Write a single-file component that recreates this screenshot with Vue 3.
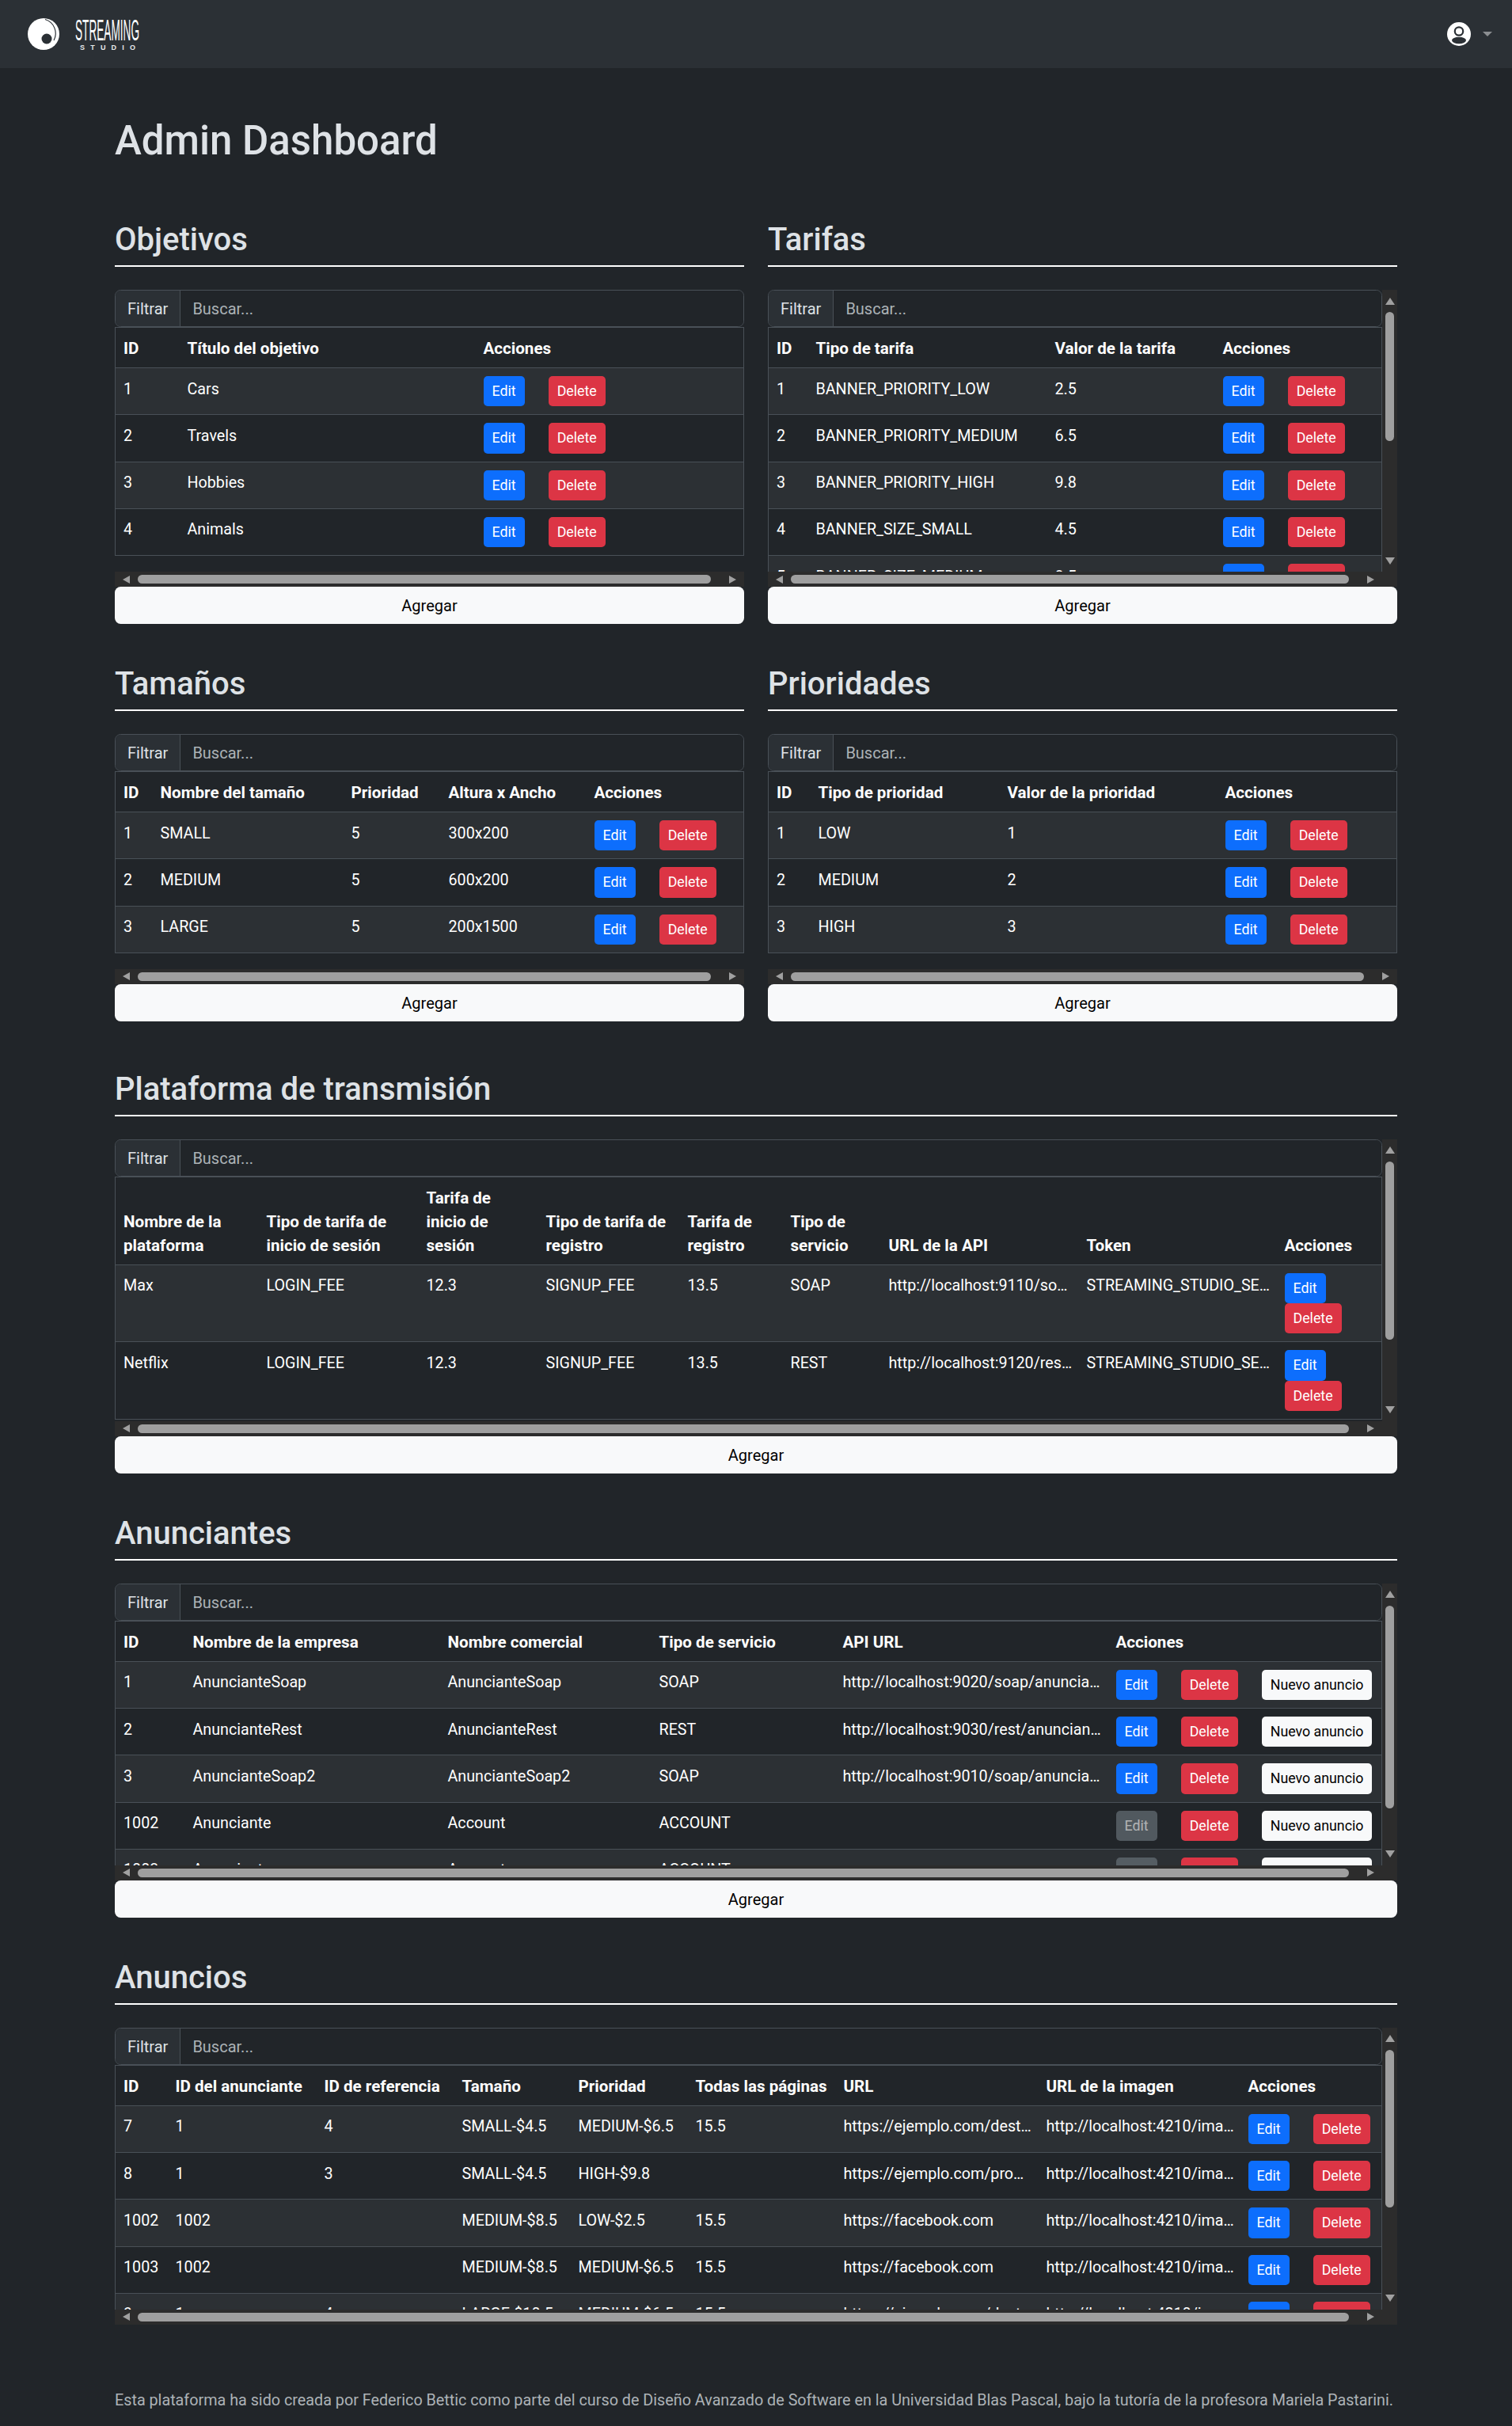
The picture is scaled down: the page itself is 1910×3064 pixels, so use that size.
<script setup>
  const url = (s) => 'http://localhost:' + s
  const token = 'STREAMING_STUDIO_SECRET'
  const image = url('4210/image')

  const objetivos = {
    title: 'Objetivos', add: true,
    cols: [83, 374, null],
    head: ['ID', 'Título del objetivo', 'Acciones'],
    rows: [['1', 'Cars'], ['2', 'Travels'], ['3', 'Hobbies'], ['4', 'Animals']]
  }
  const tarifas = {
    title: 'Tarifas', add: true, thumb: 163,
    cols: [52, 302, 212, null],
    head: ['ID', 'Tipo de tarifa', 'Valor de la tarifa', 'Acciones'],
    rows: [
      ['1', 'BANNER_PRIORITY_LOW', '2.5'],
      ['2', 'BANNER_PRIORITY_MEDIUM', '6.5'],
      ['3', 'BANNER_PRIORITY_HIGH', '9.8'],
      ['4', 'BANNER_SIZE_SMALL', '4.5'],
      ['5', 'BANNER_SIZE_MEDIUM', '8.5']
    ]
  }
  const tamanos = {
    title: 'Tamaños', add: true,
    cols: [49, 241, 123, 184, null],
    head: ['ID', 'Nombre del tamaño', 'Prioridad', 'Altura x Ancho', 'Acciones'],
    rows: [
      ['1', 'SMALL', '5', '300x200'],
      ['2', 'MEDIUM', '5', '600x200'],
      ['3', 'LARGE', '5', '200x1500']
    ]
  }
  const prioridades = {
    title: 'Prioridades', add: true,
    cols: [55, 239, 275, null],
    head: ['ID', 'Tipo de prioridad', 'Valor de la prioridad', 'Acciones'],
    rows: [['1', 'LOW', '1'], ['2', 'MEDIUM', '2'], ['3', 'HIGH', '3']]
  }
  const plataformas = {
    title: 'Plataforma de transmisión', add: true, thumb: 225,
    cols: [183, 202, 151, 179, 130, 124, 250, 250, null],
    head: ['Nombre de la plataforma', 'Tipo de tarifa de inicio de sesión', 'Tarifa de inicio de sesión', 'Tipo de tarifa de registro', 'Tarifa de registro', 'Tipo de servicio', 'URL de la API', 'Token', 'Acciones'],
    rows: [
      ['Max', 'LOGIN_FEE', '12.3', 'SIGNUP_FEE', '13.5', 'SOAP', url('9110/soap/ads'), token],
      ['Netflix', 'LOGIN_FEE', '12.3', 'SIGNUP_FEE', '13.5', 'REST', url('9120/rest/ads'), token]
    ]
  }
  const anunciantes = {
    title: 'Anunciantes', add: true, nuevo: true, thumb: 256,
    cols: [90, 322, 267, 232, 345, null],
    head: ['ID', 'Nombre de la empresa', 'Nombre comercial', 'Tipo de servicio', 'API URL', 'Acciones'],
    noEdit: ['1002', '1003'],
    rows: [
      ['1', 'AnuncianteSoap', 'AnuncianteSoap', 'SOAP', url('9020/soap/anunciantes')],
      ['2', 'AnuncianteRest', 'AnuncianteRest', 'REST', url('9030/rest/anunciantes')],
      ['3', 'AnuncianteSoap2', 'AnuncianteSoap2', 'SOAP', url('9010/soap/anunciantes')],
      ['1002', 'Anunciante', 'Account', 'ACCOUNT', ''],
      ['1003', 'Anunciante', 'Account', 'ACCOUNT', '']
    ]
  }
  const anuncios = {
    title: 'Anuncios', add: false, thumb: 199,
    cols: [68, 188, 174, 147, 148, 187, 256, 255, null],
    head: ['ID', 'ID del anunciante', 'ID de referencia', 'Tamaño', 'Prioridad', 'Todas las páginas', 'URL', 'URL de la imagen', 'Acciones'],
    rows: [
      ['7', '1', '4', 'SMALL-$4.5', 'MEDIUM-$6.5', '15.5', 'https://ejemplo.com/destino', image],
      ['8', '1', '3', 'SMALL-$4.5', 'HIGH-$9.8', '', 'https://ejemplo.com/promo', image],
      ['1002', '1002', '', 'MEDIUM-$8.5', 'LOW-$2.5', '15.5', 'https://facebook.com', image],
      ['1003', '1002', '', 'MEDIUM-$8.5', 'MEDIUM-$6.5', '15.5', 'https://facebook.com', image],
      ['9', '1', '4', 'LARGE-$10.5', 'MEDIUM-$6.5', '15.5', 'https://ejemplo.com/destino', image]
    ]
  }

  const groups = [
    { name: 'two-cols', tables: [objetivos, tarifas, tamanos, prioridades] },
    { name: 'one-col', tables: [plataformas, anunciantes, anuncios] }
  ]

  function colStyle(w){
    return w ? { width: w + 'px' } : {}
  }
</script>

<template>
  <div class="page">
    <nav class="navbar">
      <svg class="logo" width="150" height="44" viewBox="0 0 150 44">
        <circle cx="20" cy="22" r="20" fill="#fff" />
        <path d="M22 3.5 A 18.5 18.5 0 0 1 33 30" fill="none" stroke="#2b3035" stroke-width="1.2" />
        <circle cx="24" cy="28" r="6.5" fill="#2b3035" />
        <text x="60" y="30" font-family="Liberation Sans, sans-serif" font-size="37" fill="#fff" textLength="81" lengthAdjust="spacingAndGlyphs">STREAMING</text>
        <text x="66" y="42" font-family="Liberation Sans, sans-serif" font-size="9" font-weight="700" fill="#e6e8ea" textLength="70">STUDIO</text>
      </svg>
      <div class="user">
        <svg width="30" height="30" viewBox="0 0 30 30">
          <defs>
            <clipPath id="user-clip"><circle cx="15" cy="15" r="15" /></clipPath>
          </defs>
          <circle cx="15" cy="15" r="15" fill="#fff" />
          <circle cx="15" cy="11.5" r="5.2" fill="#fff" stroke="#2b3035" stroke-width="2.2" />
          <ellipse cx="15" cy="23" rx="9" ry="4.2" fill="#2b3035" clip-path="url(#user-clip)" />
        </svg>
        <span class="caret"></span>
      </div>
    </nav>

    <main class="content">
      <h1>Admin Dashboard</h1>

      <div v-for="group in groups" :key="group.name" :class="group.name">
        <section v-for="t in group.tables" :key="t.title" class="block">
          <h2>{{ t.title }}</h2>
          <div class="scroll-box">
            <div class="view">
              <div class="filter">
                <span class="addon">Filtrar</span>
                <input class="search" type="text" placeholder="Buscar...">
              </div>
              <table>
                <colgroup>
                  <col v-for="(w, i) in t.cols" :key="i" :style="colStyle(w)">
                </colgroup>
                <thead>
                  <tr>
                    <th v-for="h in t.head" :key="h">{{ h }}</th>
                  </tr>
                </thead>
                <tbody>
                  <tr v-for="row in t.rows" :key="row[0]">
                    <td v-for="(cell, i) in row" :key="i">{{ cell }}</td>
                    <td class="actions">
                      <button class="btn edit" :disabled="t.noEdit && t.noEdit.includes(row[0])">Edit</button>
                      <button class="btn delete">Delete</button>
                      <button v-if="t.nuevo" class="btn nuevo">Nuevo anuncio</button>
                    </td>
                  </tr>
                </tbody>
              </table>
            </div>
            <!-- the browser hides real scrollbars in the photo, so these are drawn -->
            <div v-if="t.thumb" class="vbar">
              <span class="arrow up"></span>
              <div class="vtrack">
                <div class="vthumb" :style="{ height: t.thumb + 'px' }"></div>
              </div>
              <span class="arrow down"></span>
            </div>
            <div class="hbar" :class="{ corner: t.thumb }">
              <span class="arrow left"></span>
              <div class="htrack">
                <div class="hthumb"></div>
              </div>
              <span class="arrow right"></span>
            </div>
          </div>
          <button v-if="t.add" class="add">Agregar</button>
        </section>
      </div>

      <p class="credits">Esta plataforma ha sido creada por Federico Bettic como parte del curso de Diseño Avanzado de Software en la Universidad Blas Pascal, bajo la tutoría de la profesora Mariela Pastarini.</p>
    </main>
  </div>
</template>

<style scoped>
  .page {
    color: #dee2e6;
    font-family: Roboto, "Liberation Sans", sans-serif;
    font-size: 20px;
    line-height: 30px;
  }

  .navbar {
    height: 86px;
    background-color: #2b3035;
    display: flex;
    align-items: center;
    justify-content: space-between;
    padding: 0 25px 0 35px;
  }

  .user {
    display: flex;
    align-items: center;
    gap: 15px;
  }

  .user svg {
    display: block;
  }

  .caret {
    width: 0;
    height: 0;
    border-top: 6px solid #8b8e91;
    border-left: 6px solid transparent;
    border-right: 6px solid transparent;
  }

  .content {
    padding: 62px 145px 19px;
  }

  h1 {
    margin: 0 0 71px;
    font-size: 51px;
    line-height: 60px;
    font-weight: 500;
  }

  h2 {
    margin: 0 0 29px;
    padding-bottom: 8px;
    border-bottom: 2px solid #fff;
    font-size: 40px;
    line-height: 48px;
    font-weight: 500;
  }

  .two-cols {
    display: grid;
    grid-template-columns: minmax(0, 1fr) minmax(0, 1fr);
    column-gap: 30px;
    row-gap: 52px;
    margin-bottom: 62px;
  }

  .one-col {
    display: flex;
    flex-direction: column;
    gap: 52px;
  }

  .scroll-box {
    display: grid;
    grid-template-columns: minmax(0, 1fr) auto;
  }

  .view {
    max-height: 356px;
    overflow: hidden;
  }

  .vbar {
    width: 19px;
    display: flex;
    flex-direction: column;
    background-color: #2c2c2c;
  }

  .vtrack {
    flex: 1;
    padding: 0 4px;
  }

  .vthumb {
    background-color: #9f9f9f;
    border-radius: 6px;
  }

  .hbar {
    grid-column: 1 / -1;
    height: 19px;
    display: flex;
    background-color: #2c2c2c;
  }

  .hbar.corner {
    padding-right: 19px;
  }

  .htrack {
    flex: 1;
    padding: 4px 0;
  }

  .hthumb {
    width: calc(100% - 13px);
    height: 11px;
    background-color: #9f9f9f;
    border-radius: 6px;
  }

  .arrow {
    flex: none;
    display: flex;
    align-items: center;
    justify-content: center;
  }

  .arrow::before {
    content: "";
    width: 0;
    height: 0;
  }

  .up, .down {
    height: 28px;
  }

  .left, .right {
    width: 29px;
  }

  .up::before {
    border-bottom: 9px solid #a0a0a0;
    border-left: 6.5px solid transparent;
    border-right: 6.5px solid transparent;
  }

  .down::before {
    border-top: 9px solid #a0a0a0;
    border-left: 6.5px solid transparent;
    border-right: 6.5px solid transparent;
  }

  .left::before {
    border-right: 9px solid #a0a0a0;
    border-top: 5.5px solid transparent;
    border-bottom: 5.5px solid transparent;
  }

  .right::before {
    border-left: 9px solid #a0a0a0;
    border-top: 5.5px solid transparent;
    border-bottom: 5.5px solid transparent;
  }

  .filter {
    display: flex;
    height: 47px;
    box-sizing: border-box;
    border: 1px solid #495057;
    border-radius: 7.5px;
    overflow: hidden;
  }

  .addon {
    padding: 8px 15px 7px;
    background-color: #2b3035;
    border-right: 1px solid #495057;
    line-height: 30px;
  }

  .search {
    flex: 1;
    min-width: 0;
    padding: 1px 15px 0;
    border: none;
    outline: none;
    background-color: #212529;
    color: #dee2e6;
    font: inherit;
  }

  .search::placeholder {
    color: rgba(222, 226, 230, 0.75);
  }

  table {
    width: 100%;
    table-layout: fixed;
    border-collapse: collapse;
    border: 1px solid #495057;
    margin-bottom: 20px;
    color: #fff;
  }

  th {
    padding: 11px 8px 9px;
    text-align: left;
    vertical-align: bottom;
    font-size: 20.6px;
    font-weight: 700;
    border-bottom: 1px solid #495057;
  }

  td {
    padding: 11.5px 8px 8.5px;
    vertical-align: top;
    font-size: 19.7px;
    white-space: nowrap;
    overflow: hidden;
    text-overflow: ellipsis;
    border-bottom: 1px solid #495057;
  }

  th:first-child, td:first-child {
    padding-left: 10px;
  }

  tbody tr:nth-child(odd) {
    background-color: #2c3034;
  }

  td.actions {
    padding: 10px 8px;
    white-space: normal;
    overflow: visible;
  }

  .btn {
    display: inline-block;
    vertical-align: top;
    margin: 0 30px 0 0;
    padding: 5px 10px;
    border: 1px solid transparent;
    border-radius: 5px;
    font: inherit;
    font-size: 17.8px;
    line-height: 26.25px;
    color: #fff;
  }

  .btn:last-child {
    margin-right: 0;
  }

  .edit {
    background-color: #0d6efd;
  }

  .edit:disabled {
    background-color: #6c757d;
    opacity: 0.65;
  }

  .delete {
    background-color: #dc3545;
  }

  .nuevo {
    background-color: #f8f9fa;
    color: #000;
  }

  .add {
    display: block;
    width: 100%;
    height: 47px;
    padding: 1px 0 0;
    border: none;
    border-radius: 7.5px;
    background-color: #f8f9fa;
    color: #000;
    font: inherit;
  }

  .credits {
    margin: 81px 0 0;
    font-size: 19.75px;
    color: rgba(222, 226, 230, 0.75);
  }
</style>

<style>
  html, body {
    background-color: #212529;
  }
</style>
